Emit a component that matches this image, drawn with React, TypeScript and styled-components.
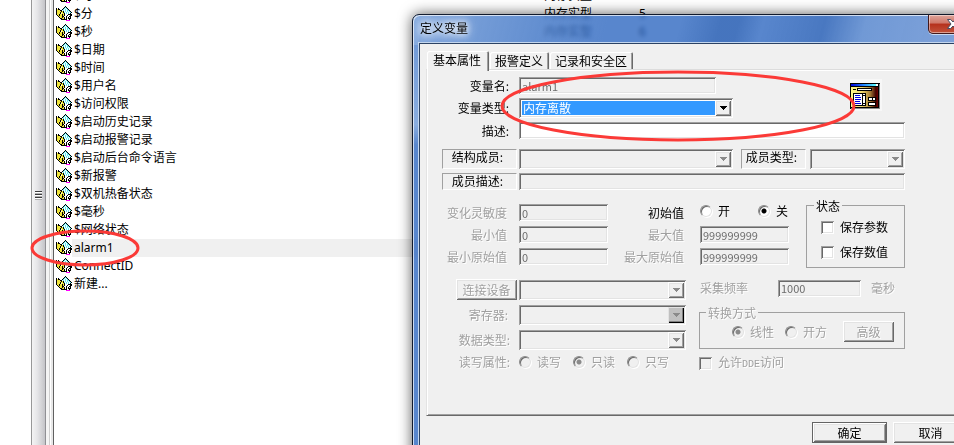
import React from "react";
import styled, { createGlobalStyle, css } from "styled-components";

const GlobalStyle = createGlobalStyle`
  * { box-sizing: border-box; }
  body {
    margin: 0;
    background: #fff;
    color: #000;
    font: 12px/18px "Noto Sans CJK SC", sans-serif;
    overflow: hidden;
  }
  button, input, select, fieldset, legend { font: inherit; color: inherit; margin: 0; padding: 0; }
`;

const sunken = css`
  border: 0;
  box-shadow: inset 1px 1px #a0a0a0, inset -1px -1px #fff, inset 2px 2px #696969, inset -2px -2px #e3e3e3;
`;
const raised = css`
  border: 0;
  box-shadow: inset 1px 1px #fff, inset -1px -1px #696969, inset 2px 2px #e3e3e3, inset -2px -2px #a0a0a0;
`;

/* ---------- Main window ---------- */

const Desktop = styled.div`
  position: relative;
  display: flex;
  height: 100vh;
  padding-left: 31px;
  overflow: hidden;
`;

const ScrollTrack = styled.div`
  display: flex;
  flex: none;
  align-items: center;
  justify-content: center;
  width: 15px;
  padding-bottom: 54px;
  border-left: 1px solid #989898;
  border-right: 1px solid #909094;
  background: linear-gradient(to right, #f4f4f4, #e6e6e8 40%, #c4c4c8);
`;

const Grip = styled.div`
  width: 7px;
  height: 9px;
  background: repeating-linear-gradient(to bottom, #3c3c3c 0 1px, #fff 1px 2px, #b0b0b0 2px 3px);
`;

const Gutter = styled.div`
  flex: none;
  width: 8px;
  border-right: 1px solid #606060;
  background: linear-gradient(to right, #f4f4f4 0 3px, #cfcfcf 3px 4px, #fff 4px 5px, #e8e8e8 5px);
`;

const ListPane = styled.div`
  flex: 1;
  min-width: 0;
  overflow: hidden;
`;

const VariableTable = styled.table`
  width: 100%;
  margin-top: -13px;
  border-collapse: collapse;
  table-layout: fixed;
  font-family: "Noto Sans", "Noto Sans CJK SC", sans-serif;
`;

const NameCol = styled.col`
  width: 490px;
`;
const TypeCol = styled.col`
  width: 95px;
`;

const Cell = styled.td<{ $selected?: boolean }>`
  height: 18px;
  padding: 0;
  line-height: 18px;
  white-space: nowrap;
  background: ${(p) => (p.$selected ? "#f0f0f0" : "transparent")};
`;

const NameWrap = styled.div`
  display: flex;
  padding-left: 2px;
  background: #fff;
`;

const NameText = styled.span<{ $selected?: boolean }>`
  flex: 1;
  padding-left: 2px;
  background: ${(p) => (p.$selected ? "#f0f0f0" : "transparent")};
`;

const TagSvg = styled.svg`
  display: block;
  flex: none;
  width: 16px;
  height: 18px;
`;

const TAG_PIXELS = [
  ".........K......",
  "........KCK.....",
  "K.K....KCWCK....",
  "KYKK..KCWCWCK...",
  "KYYYKKWCWCWCCK..",
  "KYYYYKYKWCWCWCK.",
  "KYYYKYYKCWCWCWCK",
  "KYYYKWYYKWCWCWK.",
  "KYYKYYKYKWWWKKKK",
  ".KYKYYKYKWWKWWKK",
  "..KYYYKKWWKWWKK.",
  "...KYYKYKWKWKWK.",
  "....KKYYKWKWKKK.",
  ".....KKKKKKWWK..",
  "..........MMMM..",
];
const TAG_COLORS: Record<string, string> = {
  K: "#000",
  C: "#5ee6ee",
  W: "#fff",
  Y: "#eee43c",
  M: "#ff00ff",
};

function TagIcon() {
  return (
    <TagSvg viewBox="0 0 16 18" shapeRendering="crispEdges" aria-hidden="true">
      {Object.keys(TAG_COLORS).map((key) => (
        <path
          key={key}
          fill={TAG_COLORS[key]}
          d={TAG_PIXELS.map((row, y) =>
            [...row].map((c, x) => (c === key ? `M${x} ${y + 1}h1v1h-1z` : "")).join("")
          ).join("")}
        />
      ))}
    </TagSvg>
  );
}

type Variable = { name: string; type?: string; id?: string };
const VARIABLES: Variable[] = [
  { name: "$时", type: "内存实型" },
  { name: "$分", type: "内存实型", id: "5" },
  { name: "$秒", type: "内存实型", id: "6" },
  { name: "$日期" },
  { name: "$时间" },
  { name: "$用户名" },
  { name: "$访问权限" },
  { name: "$启动历史记录" },
  { name: "$启动报警记录" },
  { name: "$启动后台命令语言" },
  { name: "$新报警" },
  { name: "$双机热备状态" },
  { name: "$毫秒" },
  { name: "$网络状态" },
  { name: "alarm1" },
  { name: "ConnectID" },
  { name: "新建..." },
];

/* ---------- Dialog ---------- */

const Dialog = styled.section`
  position: absolute;
  top: 14px;
  left: 412px;
  right: -30px;
  min-height: 440px;
  padding: 0 6px 8px;
  border: 1px solid #111a2c;
  border-radius: 7px 7px 0 0;
  background:
    linear-gradient(to bottom, rgba(140, 176, 226, 0.5) 30px, rgba(170, 198, 234, 0.6) 110px, transparent 130px) 0 0 / 6px 100% no-repeat,
    linear-gradient(105deg, rgba(160, 190, 230, 0.62) 0, rgba(120, 160, 215, 0.3) 130px, transparent 190px, transparent 260px,
      rgba(20, 70, 150, 0.28) 300px, rgba(20, 70, 150, 0.28) 316px, transparent 340px, rgba(20, 70, 150, 0.22) 400px,
      rgba(160, 190, 230, 0.35) 440px, rgba(180, 200, 235, 0.45) 100%) 0 0 / 100% 30px no-repeat,
    rgba(38, 97, 190, 0.77);
  backdrop-filter: blur(2px);
  box-shadow: inset 1px 1px rgba(255, 255, 255, 0.7), 0 0 14px rgba(0, 0, 0, 0.65);
`;

const TitleBar = styled.header`
  display: flex;
  align-items: flex-start;
  justify-content: space-between;
  height: 28px;
`;

const Title = styled.h1`
  margin: 4px 0 0 1px;
  font-size: 12px;
  line-height: 18px;
  font-weight: 400;
  text-shadow: 0 0 6px #fff, 0 0 8px #fff, 0 0 12px #fff;
`;

const CloseButton = styled.button`
  display: flex;
  align-items: center;
  justify-content: center;
  width: 49px;
  height: 19px;
  border: 1px solid #43191b;
  border-top: 0;
  border-radius: 0 0 5px 5px;
  background: linear-gradient(to bottom, #dfa59b 0, #cf7668 45%, #b5301c 50%, #c2533c 100%);
  box-shadow: inset 0 0 0 1px rgba(255, 255, 255, 0.45), 0 1px rgba(255, 255, 255, 0.6);
`;

const Client = styled.div`
  border: 1px solid #2b4264;
  background: #f0f0f0;
  box-shadow: 0 0 0 1px #c3d6ee;
  padding: 7px 6px 8px;
`;

const TabList = styled.div`
  display: flex;
  align-items: flex-end;
  height: 18px;
  padding-left: 1px;
`;

const Tab = styled.button<{ $active?: boolean }>`
  position: relative;
  z-index: ${(p) => (p.$active ? 1 : 0)};
  height: ${(p) => (p.$active ? 20 : 17)}px;
  margin-bottom: ${(p) => (p.$active ? -2 : 0)}px;
  margin-right: 1px;
  padding: ${(p) => (p.$active ? "0 8px 2px 6px" : "0 6px 0 5px")};
  border: 0;
  border-radius: 2px 2px 0 0;
  background: #f0f0f0;
  box-shadow: inset 1px 1px #fff, inset -1px 0 #696969, inset -2px 0 #a0a0a0;
  line-height: 16px;
  white-space: nowrap;
`;

const Panel = styled.div`
  padding: 7px 15px 43px;
  border: 1px solid #e3e3e3;
  border-top-color: #dcdcdc;
  border-bottom: 1px solid #696969;
  box-shadow: inset 1px 1px #fff, inset 0 -1px #a0a0a0;
`;

const Form = styled.form`
  width: 463px;
  max-width: 100%;
  line-height: 16px;
`;

const TopArea = styled.div`
  display: flex;
  align-items: flex-start;
`;

const MainFields = styled.div`
  flex: 1;
`;

const Row = styled.div<{ $gap?: number }>`
  display: grid;
  grid-template-columns: 75px 1fr;
  column-gap: 2px;
  align-items: center;
  margin-bottom: ${(p) => p.$gap ?? 4}px;
`;

const Label = styled.label<{ $dim?: boolean; $end?: number }>`
  padding-right: ${(p) => p.$end ?? 0}px;
  text-align: right;
  line-height: 16px;
  white-space: nowrap;
  ${(p) => p.$dim && css`color: #a0a0a0; text-shadow: 1px 1px #fff;`}
`;

const BoxLabel = styled.label`
  align-self: stretch;
  padding-right: 4px;
  line-height: 13px;
  border: 1px solid;
  border-color: #a0a0a0 #fff #fff #a0a0a0;
  text-align: center;
  white-space: nowrap;
`;

const TextInput = styled.input<{ $width?: number }>`
  ${sunken}
  width: ${(p) => (p.$width ? `${p.$width}px` : "100%")};
  height: 17px;
  padding: 0 3px;
  border-radius: 0;
  outline: 0;
  background: #fff;
  font-size: 11px;
  line-height: 15px;
  &:disabled { background: #f0f0f0; color: #6d6d6d; }
`;

const SelectFrame = styled.span<{ $width?: number }>`
  ${sunken}
  display: grid;
  grid-template-columns: 1fr 16px;
  width: ${(p) => (p.$width ? `${p.$width}px` : "100%")};
  height: 20px;
  padding: 2px;
  background: #f0f0f0;
`;

const NativeSelect = styled.select<{ $lit?: boolean }>`
  grid-area: 1 / 1 / 2 / 3;
  width: 100%;
  height: 16px;
  padding: 0 18px 0 1px;
  border: 1px solid ${(p) => (p.$lit ? "#fff" : "#f0f0f0")};
  border-radius: 0;
  outline: 0;
  appearance: none;
  background: ${(p) => (p.$lit ? "#3399ff" : "#f0f0f0")};
  color: #fff;
  line-height: 14px;
  opacity: 1;
`;

const Arrow = styled.span<{ $tone?: "on" | "off" | "dark" }>`
  ${raised}
  z-index: 1;
  grid-area: 1 / 2;
  display: flex;
  align-items: center;
  justify-content: center;
  pointer-events: none;
  background: #f0f0f0;
  color: ${(p) => (p.$tone === "on" ? "#000" : "#8a8a8a")};
  ${(p) =>
    p.$tone === "dark" &&
    css`background: #c0c0c0; box-shadow: inset 1px 1px #e3e3e3, inset -1px -1px #000, inset -2px -2px #808080;`}
`;

const Columns = styled.div`
  display: flex;
  justify-content: space-between;
  align-items: flex-start;
`;

const MemberTypeRow = styled.div`
  display: grid;
  grid-template-columns: 65px 95px;
  column-gap: 4px;
  align-items: center;
`;

const SectionColumns = styled(Columns)`
  margin-bottom: 11px;
`;

const RangeGrid = styled.div`
  display: grid;
  grid-template-columns: 77px 89px 1fr 89px;
  grid-auto-rows: 17px;
  row-gap: 5px;
  align-items: center;
  width: 347px;
  padding-top: 5px;
`;

const Choices = styled.div<{ $gap: number }>`
  display: flex;
  gap: ${(p) => p.$gap}px;
`;

const StartChoices = styled(Choices)`
  align-self: start;
`;

const Choice = styled.label<{ $dim?: boolean }>`
  display: flex;
  align-items: center;
  gap: 6px;
  line-height: 14px;
  white-space: nowrap;
  ${(p) => p.$dim && css`color: #a0a0a0; text-shadow: 1px 1px #fff;`}
`;

const Radio = styled.input`
  flex: none;
  width: 12px;
  height: 12px;
  margin: 0;
  appearance: none;
  border: 1px solid;
  border-color: #8a8a8a #e3e3e3 #e3e3e3 #8a8a8a;
  border-radius: 50%;
  background: #fff;
  box-shadow: inset 1px 1px #696969, 1px 1px #fff;
  &:checked { background: radial-gradient(circle, #000 0 2px, #fff 3px); }
  &:disabled { background: #f0f0f0; }
  &:disabled:checked { background: radial-gradient(circle, #8a8a8a 0 2px, #f0f0f0 3px); }
`;

const Check = styled.input`
  ${sunken}
  flex: none;
  width: 13px;
  height: 13px;
  margin: 0;
  appearance: none;
  background: #fff;
  &:disabled { background: #f0f0f0; }
`;

const Group = styled.fieldset<{ $dim?: boolean; $pad: string }>`
  min-width: 0;
  padding: ${(p) => p.$pad};
  border: 1px solid #a0a0a0;
  ${(p) => p.$dim && css`color: #a0a0a0; text-shadow: 1px 1px #fff;`}
`;

const Legend = styled.legend<{ $start: number }>`
  margin-left: ${(p) => p.$start}px;
  padding: 0 2px;
  line-height: 13px;
`;

const StateList = styled.div`
  display: flex;
  flex-direction: column;
  gap: 11px;
`;

const DeviceFields = styled.div`
  flex: 0 0 244px;
`;

const DeviceButton = styled.button`
  ${raised}
  justify-self: end;
  width: 61px;
  height: 21px;
  background: #f0f0f0;
  line-height: 17px;
  &:disabled { color: #a0a0a0; text-shadow: 1px 1px #fff; }
`;

const RateFields = styled.div`
  flex: 0 0 205px;
`;

const RateRow = styled.div`
  display: flex;
  align-items: center;
  height: 18px;
  margin-bottom: 9px;
`;

const RateLabel = styled(Label)`
  flex: 1;
  text-align: left;
  padding-left: 1px;
`;

const Unit = styled(Label)`
  padding-left: 10px;
  width: 44px;
  text-align: left;
`;

const PushButton = styled.button<{ $width: number; $primary?: boolean }>`
  ${raised}
  width: ${(p) => p.$width}px;
  height: 21px;
  background: #f0f0f0;
  line-height: 17px;
  ${(p) => p.$primary && css`border: 1px solid #646464;`}
  &:disabled { color: #a0a0a0; text-shadow: 1px 1px #fff; }
`;

const ConvertRow = styled.div`
  display: flex;
  align-items: center;
  gap: 11px;
`;

const ConvertButton = styled(PushButton)`
  margin-left: 5px;
`;

const RemoteChoice = styled(Choice)`
  margin-top: 6px;
`;

const Mono = styled.span`
  font: 10px/14px "Liberation Mono", monospace;
`;

const Footer = styled.footer`
  display: flex;
  justify-content: flex-end;
  gap: 6px;
  padding: 6px 2px 0 0;
`;

const AppBadge = styled.div`
  width: 32px;
  height: 32px;
  margin: 2px 23px 0 0;
  background: #f7f7f7;
`;

const Marker = styled.svg<{ $x: number; $y: number }>`
  position: absolute;
  left: ${(p) => p.$x}px;
  top: ${(p) => p.$y}px;
  pointer-events: none;
  fill: none;
  stroke: #fb3a37;
  stroke-width: 3;
`;

type SelectProps = { id: string; width?: number; value?: string; tone?: "on" | "off" | "dark"; label?: string };

function DropDown({ id, width, value, tone = "off", label }: SelectProps) {
  return (
    <SelectFrame $width={width}>
      <NativeSelect id={id} $lit={tone === "on"} disabled={tone !== "on"} aria-label={label}>
        {value && <option>{value}</option>}
      </NativeSelect>
      <Arrow $tone={tone}>
        <svg width="7" height="4" viewBox="0 0 7 4" shapeRendering="crispEdges" aria-hidden="true">
          <path fill="currentColor" d="M0 0h7v1h-1v1h-1v1h-1v1h-1v-1h-1v-1h-1v-1h-1z" />
        </svg>
      </Arrow>
    </SelectFrame>
  );
}

function WindowIcon() {
  return (
    <svg width="32" height="32" viewBox="0 0 32 32" shapeRendering="crispEdges" aria-hidden="true">
      <defs>
        <linearGradient id="bar">
          <stop offset="0" stopColor="#0000d8" />
          <stop offset="0.5" stopColor="#2080ff" />
          <stop offset="1" stopColor="#60ffff" />
        </linearGradient>
        <linearGradient id="face">
          <stop offset="0" stopColor="#fff888" />
          <stop offset="0.4" stopColor="#f0d870" />
          <stop offset="0.7" stopColor="#a88038" />
          <stop offset="0.92" stopColor="#400000" />
          <stop offset="1" stopColor="#700000" />
        </linearGradient>
      </defs>
      <path fill="#000" d="M0 4h30v26H0z" />
      <path fill="#888" d="M29 5h1v25H1v-1h28z" />
      <path fill="url(#bar)" d="M1 5h25v2H1z" />
      <path fill="#fff" d="M26 5h2v2h-2z" />
      <path fill="url(#face)" d="M1 8h27v20H1z" />
      <path fill="#000" d="M3 10h3v1H3zM7 9h15v3H7z" />
      <path fill="#fff" d="M8 10h13v1H8z" />
      <path fill="#000" d="M3 14h13v13H3z" />
      <path fill="#fff" d="M4 15h8v11H4zM13 15h2v1h-2zM13 17h2v7h-2zM13 25h2v1h-2z" />
      <path fill="#0000e0" d="M5 16h5v1H5zM5 18h6v1H5zM5 20h6v1H5zM5 22h5v1H5zM5 24h6v1H5z" />
      <path fill="#000" d="M18 18h8v4h-8zM18 23h8v4h-8z" />
      <path fill="#fff" d="M19 19h3v2h-3zM23 19h2v2h-2zM19 24h6v2h-6z" />
    </svg>
  );
}

export default function App() {
  return (
    <Desktop>
      <GlobalStyle />
      <ScrollTrack>
        <Grip />
      </ScrollTrack>
      <Gutter />
      <ListPane>
        <VariableTable>
          <colgroup>
            <NameCol />
            <TypeCol />
            <col />
          </colgroup>
          <tbody>
            {VARIABLES.map((v) => {
              const selected = v.name === "alarm1";
              return (
                <tr key={v.name}>
                  <Cell $selected={selected}>
                    <NameWrap>
                      <TagIcon />
                      <NameText $selected={selected}>{v.name}</NameText>
                    </NameWrap>
                  </Cell>
                  <Cell $selected={selected}>{v.type}</Cell>
                  <Cell $selected={selected}>{v.id}</Cell>
                </tr>
              );
            })}
          </tbody>
        </VariableTable>
      </ListPane>

      <Dialog role="dialog" aria-labelledby="dialog-title">
        <TitleBar>
          <Title id="dialog-title">定义变量</Title>
          <CloseButton aria-label="关闭">
            <svg width="14" height="12" viewBox="0 0 14 12" aria-hidden="true">
              <path
                d="M1.500 1.500h3.200L7 4l2.300-2.500h3.200L9 6l3.500 4.500H9.300L7 8l-2.300 2.500H1.500L5 6z"
                fill="#fff"
                stroke="#4a4d63"
              />
            </svg>
          </CloseButton>
        </TitleBar>
        <Client>
          <TabList role="tablist">
            <Tab role="tab" aria-selected="true" $active>基本属性</Tab>
            <Tab role="tab" aria-selected="false">报警定义</Tab>
            <Tab role="tab" aria-selected="false">记录和安全区</Tab>
          </TabList>
          <Panel role="tabpanel">
            <Form>
              <TopArea>
                <MainFields>
                  <Row>
                    <Label htmlFor="name" $end={8}>变量名:</Label>
                    <TextInput id="name" $width={197} defaultValue="alarm1" disabled />
                  </Row>
                  <Row>
                    <Label htmlFor="type" $end={8}>变量类型:</Label>
                    <DropDown id="type" width={214} value="内存离散" tone="on" />
                  </Row>
                </MainFields>
                <AppBadge>
                  <WindowIcon />
                </AppBadge>
              </TopArea>
              <Row $gap={10}>
                <Label htmlFor="desc" $end={8}>描述:</Label>
                <TextInput id="desc" />
              </Row>
              <Columns>
                <Row>
                  <BoxLabel htmlFor="member">结构成员:</BoxLabel>
                  <DropDown id="member" width={214} />
                </Row>
                <MemberTypeRow>
                  <BoxLabel htmlFor="member-type">成员类型:</BoxLabel>
                  <DropDown id="member-type" />
                </MemberTypeRow>
              </Columns>
              <Row $gap={9}>
                <BoxLabel htmlFor="member-desc">成员描述:</BoxLabel>
                <TextInput id="member-desc" disabled />
              </Row>

              <SectionColumns>
                <RangeGrid>
                  <Label htmlFor="delta" $dim $end={12}>变化灵敏度</Label>
                  <TextInput id="delta" defaultValue="0" disabled />
                  <Label as="span" $end={16}>初始值</Label>
                  <StartChoices $gap={28}>
                    <Choice><Radio type="radio" name="init" />开</Choice>
                    <Choice><Radio type="radio" name="init" defaultChecked />关</Choice>
                  </StartChoices>
                  <Label htmlFor="min" $dim $end={12}>最小值</Label>
                  <TextInput id="min" defaultValue="0" disabled />
                  <Label htmlFor="max" $dim $end={16}>最大值</Label>
                  <TextInput id="max" defaultValue="999999999" disabled />
                  <Label htmlFor="raw-min" $dim $end={12}>最小原始值</Label>
                  <TextInput id="raw-min" defaultValue="0" disabled />
                  <Label htmlFor="raw-max" $dim $end={16}>最大原始值</Label>
                  <TextInput id="raw-max" defaultValue="999999999" disabled />
                </RangeGrid>
                <Group $pad="8px 16px 8px 14px">
                  <Legend $start={-7}>状态</Legend>
                  <StateList>
                    <Choice><Check type="checkbox" />保存参数</Choice>
                    <Choice><Check type="checkbox" />保存数值</Choice>
                  </StateList>
                </Group>
              </SectionColumns>

              <Columns>
                <DeviceFields>
                  <Row $gap={5}>
                    <DeviceButton type="button" disabled>连接设备</DeviceButton>
                    <DropDown id="device" label="连接设备" />
                  </Row>
                  <Row $gap={5}>
                    <Label htmlFor="register" $dim $end={9}>寄存器:</Label>
                    <DropDown id="register" tone="dark" />
                  </Row>
                  <Row $gap={4}>
                    <Label htmlFor="data-type" $dim $end={7}>数据类型:</Label>
                    <DropDown id="data-type" />
                  </Row>
                  <Row $gap={0}>
                    <Label as="span" $dim $end={7}>读写属性:</Label>
                    <Choices $gap={12}>
                      <Choice $dim><Radio type="radio" name="access" disabled />读写</Choice>
                      <Choice $dim><Radio type="radio" name="access" disabled defaultChecked />只读</Choice>
                      <Choice $dim><Radio type="radio" name="access" disabled />只写</Choice>
                    </Choices>
                  </Row>
                </DeviceFields>
                <RateFields>
                  <RateRow>
                    <RateLabel htmlFor="rate" $dim>采集频率</RateLabel>
                    <TextInput id="rate" $width={83} defaultValue="1000" disabled />
                    <Unit htmlFor="rate" $dim>毫秒</Unit>
                  </RateRow>
                  <Group $dim $pad="2px 10px 6px 32px">
                    <Legend $start={-26}>转换方式</Legend>
                    <ConvertRow>
                      <Choice $dim><Radio type="radio" name="convert" disabled defaultChecked />线性</Choice>
                      <Choice $dim><Radio type="radio" name="convert" disabled />开方</Choice>
                      <ConvertButton type="button" $width={51} disabled>高级</ConvertButton>
                    </ConvertRow>
                  </Group>
                  <RemoteChoice $dim>
                    <Check type="checkbox" disabled />
                    <span>允许<Mono>DDE</Mono>访问</span>
                  </RemoteChoice>
                </RateFields>
              </Columns>
            </Form>
          </Panel>
          <Footer>
            <PushButton type="button" $width={75} $primary>确定</PushButton>
            <PushButton type="button" $width={75}>取消</PushButton>
          </Footer>
        </Client>
      </Dialog>

      <Marker $x={29} $y={228} width="112" height="40" viewBox="0 0 112 40" aria-hidden="true">
        <ellipse cx="56" cy="20" rx="53" ry="17" />
      </Marker>
      <Marker $x={498} $y={68} width="360" height="76" viewBox="0 0 360 76" aria-hidden="true">
        <ellipse cx="180" cy="38" rx="176" ry="34" />
      </Marker>
    </Desktop>
  );
}
